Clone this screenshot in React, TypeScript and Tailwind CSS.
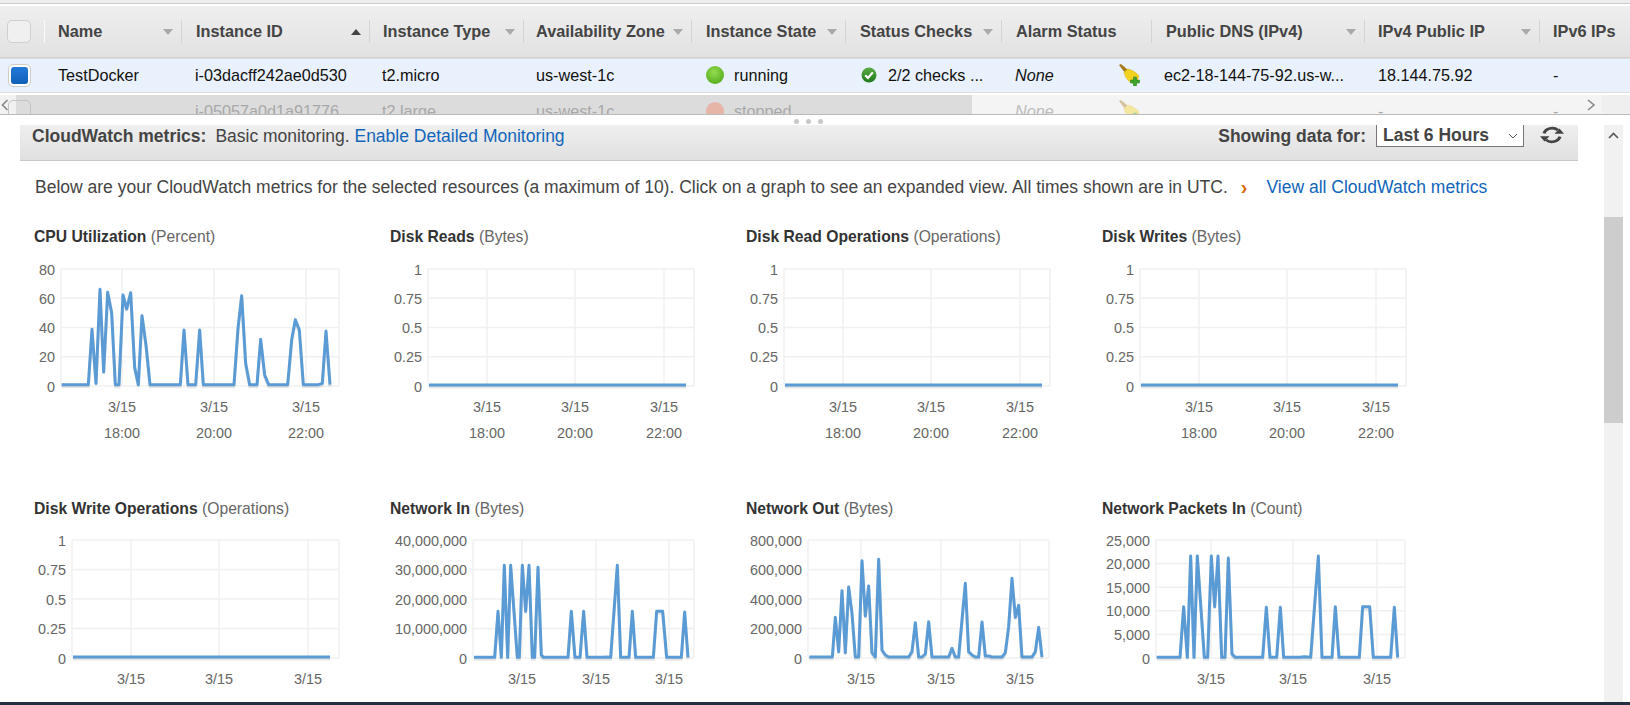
import React from 'react';

// turn a list of x,y pairs read off the screen into svg points
function trace(x0: number, y0: number, list: number[]) {
  const out: string[] = [];
  for (let i = 0; i < list.length; i += 2) {
    out.push(`${x0 + list[i] / 3},${y0 + list[i + 1] / 3}`);
  }
  return out.join(' ');
}

const cpu = trace(20, 250, [
  125, 404, 205, 404, 216, 238, 228, 400, 240, 118, 251, 366, 263, 127, 275, 188, 286, 404, 297, 404, 309, 135, 320,
  177, 332, 128, 344, 352, 355, 404, 366, 197, 378, 285, 390, 404, 481, 404, 492, 240, 504, 404, 527, 404, 539, 240,
  550, 404, 642, 404, 654, 235, 665, 137, 677, 340, 689, 404, 711, 404, 722, 268, 734, 375, 746, 404, 803, 404, 815,
  270, 826, 209, 838, 240, 850, 404, 895, 404, 907, 400, 918, 243, 930, 404,
]);
const netIn = trace(460, 530, [
  42, 382, 104, 382, 114, 244, 124, 382, 133, 106, 143, 382, 152, 106, 172, 382, 178, 382, 187, 106, 197, 244, 207,
  106, 217, 382, 224, 382, 234, 112, 244, 375, 250, 382, 324, 382, 334, 244, 345, 382, 360, 382, 371, 244, 381, 382,
  430, 382, 440, 381, 452, 382, 472, 106, 482, 382, 507, 382, 517, 244, 527, 382, 580, 382, 590, 244, 608, 244, 620,
  382, 664, 382, 674, 246, 684, 382,
]);
const netOut = trace(800, 530, [
  28, 381, 97, 381, 106, 262, 116, 365, 126, 182, 136, 368, 146, 171, 156, 250, 166, 381, 176, 381, 186, 92, 196, 258,
  206, 168, 216, 368, 226, 381, 236, 88, 246, 360, 256, 375, 266, 381, 326, 381, 336, 365, 346, 278, 356, 381, 366,
  381, 376, 372, 386, 275, 396, 381, 446, 381, 456, 355, 466, 381, 476, 381, 486, 270, 496, 160, 506, 365, 516, 375,
  526, 381, 536, 381, 546, 276, 556, 378, 566, 378, 576, 381, 606, 381, 616, 368, 626, 290, 636, 145, 646, 262, 656,
  226, 666, 381, 696, 381, 706, 365, 716, 292, 726, 381,
]);
const packetsIn = trace(1150, 530, [
  20, 382, 90, 382, 101, 230, 112, 382, 122, 78, 132, 382, 142, 78, 163, 382, 173, 382, 184, 78, 194, 230, 204, 78,
  215, 382, 225, 382, 235, 84, 246, 372, 256, 382, 338, 382, 349, 232, 360, 382, 380, 382, 391, 232, 401, 382, 450,
  382, 462, 380, 482, 382, 505, 78, 516, 382, 546, 382, 556, 230, 567, 382, 628, 382, 638, 230, 659, 230, 670, 382,
  722, 382, 733, 232, 743, 382,
]);

const zeroToOne = ['1', '0.75', '0.5', '0.25', '0'];

const row1 = { top: 269, bottom: 386, svgTop: 255 };
const row2 = { top: 540, bottom: 658, svgTop: 527 };

const charts = [
  { name: 'CPU Utilization', unit: 'Percent', labels: ['80', '60', '40', '20', '0'], col: 0, row: row1, left: 61, right: 339, ticks: [122, 214, 306], times: ['18:00', '20:00', '22:00'], series: cpu },
  { name: 'Disk Reads', unit: 'Bytes', labels: zeroToOne, col: 1, row: row1, left: 428, right: 694, ticks: [487, 575, 664], times: ['18:00', '20:00', '22:00'], series: '429,385 686,385' },
  { name: 'Disk Read Operations', unit: 'Operations', labels: zeroToOne, col: 2, row: row1, left: 784, right: 1050, ticks: [843, 931, 1020], times: ['18:00', '20:00', '22:00'], series: '785,385 1042,385' },
  { name: 'Disk Writes', unit: 'Bytes', labels: zeroToOne, col: 3, row: row1, left: 1140, right: 1406, ticks: [1199, 1287, 1376], times: ['18:00', '20:00', '22:00'], series: '1141,385 1398,385' },
  { name: 'Disk Write Operations', unit: 'Operations', labels: zeroToOne, col: 0, row: row2, left: 72, right: 339, ticks: [131, 219, 308], times: [], series: '73,657 330,657' },
  { name: 'Network In', unit: 'Bytes', labels: ['40,000,000', '30,000,000', '20,000,000', '10,000,000', '0'], col: 1, row: row2, left: 473, right: 694, ticks: [522, 596, 669], times: [], series: netIn },
  { name: 'Network Out', unit: 'Bytes', labels: ['800,000', '600,000', '400,000', '200,000', '0'], col: 2, row: row2, left: 808, right: 1049, ticks: [861, 941, 1020], times: [], series: netOut },
  { name: 'Network Packets In', unit: 'Count', labels: ['25,000', '20,000', '15,000', '10,000', '5,000', '0'], col: 3, row: row2, left: 1156, right: 1405, ticks: [1211, 1293, 1377], times: [], series: packetsIn },
];

type ChartProps = (typeof charts)[number];

function Chart({ name, unit, labels, col, row, left, right, ticks, times, series }: ChartProps) {
  const cellX = 34 + col * 356;
  const step = (row.bottom - row.top) / (labels.length - 1);
  return (
    <div className="h-[272px]">
      <div className="h-[20px] text-[15.7px] leading-[20px] whitespace-nowrap">
        <span className="font-bold text-[#333333]">{name}</span> <span className="text-[#666666]">({unit})</span>
      </div>
      <svg width="356" height="190" viewBox={`${cellX} ${row.svgTop} 356 190`} className="mt-[8px] block">
        {labels.map((label, i) => (
          <g key={label}>
            <line x1={left} x2={right} y1={row.top + i * step} y2={row.top + i * step} stroke="#f0f0f0" strokeWidth="1.5" />
            <text x={left - 6} y={row.top + i * step + 5.5} textAnchor="end" fontSize="14.4" fill="#666666">
              {label}
            </text>
          </g>
        ))}
        {[left, ...ticks, right].map((x) => (
          <line key={x} x1={x} x2={x} y1={row.top} y2={row.bottom} stroke="#f0f0f0" strokeWidth="1.5" />
        ))}
        {ticks.map((x, i) => (
          <g key={x} fontSize="14.4" fill="#666666" textAnchor="middle">
            <text x={x} y={row.bottom + 26}>3/15</text>
            {times[i] && <text x={x} y={row.bottom + 52}>{times[i]}</text>}
          </g>
        ))}
        <g className="blur-[0.4px]">
          <polyline points={series} fill="none" stroke="#000000" strokeOpacity="0.1" strokeWidth="3" transform="translate(0 2)" />
          <polyline points={series} fill="none" stroke="#5b9bd5" strokeWidth="3" strokeLinejoin="round" />
        </g>
      </svg>
    </div>
  );
}

const columns = [
  { label: 'Name', w: 'w-[137px]', pl: 'pl-[13px]', caret: 'down' },
  { label: 'Instance ID', w: 'w-[188px]', pl: 'pl-[14px]', caret: 'up' },
  { label: 'Instance Type', w: 'w-[154px]', pl: 'pl-[13px]', caret: 'down' },
  { label: 'Availability Zone', w: 'w-[168px]', pl: 'pl-[12px]', caret: 'down' },
  { label: 'Instance State', w: 'w-[154px]', pl: 'pl-[14px]', caret: 'down' },
  { label: 'Status Checks', w: 'w-[156px]', pl: 'pl-[14px]', caret: 'down' },
  { label: 'Alarm Status', w: 'w-[150px]', pl: 'pl-[14px]', caret: '' },
  { label: 'Public DNS (IPv4)', w: 'w-[213px]', pl: 'pl-[14px]', caret: 'down' },
  { label: 'IPv4 Public IP', w: 'w-[175px]', pl: 'pl-[13px]', caret: 'down' },
  { label: 'IPv6 IPs', w: 'w-[90px]', pl: 'pl-[13px]', caret: '' },
];

function HeaderCell({ label, w, pl, caret, last }: { label: string; w: string; pl: string; caret: string; last: boolean }) {
  return (
    <div className={`${w} ${pl} h-[23px] shrink-0 flex items-center justify-between pr-[8px] ${last ? '' : 'border-r border-[#d4d4d4]'}`}>
      <span className="font-bold text-[16.3px] text-[#444444] whitespace-nowrap">{label}</span>
      {caret === 'down' && <span className="w-0 h-0 border-x-[5px] border-x-transparent border-t-[6px] border-t-[#aaaaaa]" />}
      {caret === 'up' && <span className="w-0 h-0 border-x-[5px] border-x-transparent border-b-[6px] border-b-[#444444]" />}
    </div>
  );
}

function CheckIcon() {
  return (
    <svg width="16" height="16" viewBox="0 0 16 16" className="shrink-0">
      <defs>
        <linearGradient id="chk" x1="0" y1="0" x2="0" y2="1">
          <stop offset="0" stopColor="#5aad46" />
          <stop offset="1" stopColor="#1f7a1c" />
        </linearGradient>
      </defs>
      <circle cx="8" cy="8" r="7.5" fill="url(#chk)" />
      <path d="M4.2 8.2 L7 11 L11.8 5.4" fill="none" stroke="#ffffff" strokeWidth="2.2" />
    </svg>
  );
}

function BroomIcon() {
  return (
    <svg width="22" height="22" viewBox="0 0 22 22" className="shrink-0">
      <path d="M0 1 L2 0 L9 6 L6 9 Z" fill="#a6791f" />
      <path d="M5 8 L9 5 C13 6 18 9 20 12 L17 20 C12 20 6 15 5 8 Z" fill="#f2d21e" stroke="#d6ae12" strokeWidth="0.5" />
      <path d="M14.5 13 h3 v3 h3 v3 h-3 v3 h-3 v-3 h-3 v-3 h3 z" fill="#3fa52c" stroke="#1f7a1c" strokeWidth="0.5" />
    </svg>
  );
}

function RefreshIcon() {
  return (
    <svg width="26" height="18" viewBox="0 1 26 22" preserveAspectRatio="none" className="shrink-0 mt-[1px]">
      <path d="M5 10 A8.5 8.5 0 0 1 19 6" fill="none" stroke="#444444" strokeWidth="3.2" />
      <path d="M21 14 A8.5 8.5 0 0 1 7 18" fill="none" stroke="#444444" strokeWidth="3.2" />
      <path d="M15.5 10.5 L25 10.5 L20.5 4 Z" fill="#444444" />
      <path d="M1 13.5 L10.5 13.5 L5.5 20 Z" fill="#444444" />
    </svg>
  );
}

export default function App() {
  return (
    <div className="w-[1630px] h-[705px] overflow-hidden bg-white flex flex-col font-['Liberation_Sans',Arial,sans-serif] text-[#444444]">
      <div className="h-[4px] shrink-0 bg-[#eeeeee] border-b border-[#cccccc]" />
      <div className="h-[2px] shrink-0" />

      {/* instances table */}
      <div className="h-[52px] shrink-0 flex items-center bg-linear-to-b from-[#efefef] to-[#e2e2e2] border-b border-[#d0d0d0]">
        <div className="w-[45px] h-[23px] shrink-0 border-r border-[#fafafa] pl-[7px]">
          <div className="w-[24px] h-[23px] rounded-[5px] border border-[#cfcfcf] bg-[#f0f0f0]" />
        </div>
        {columns.map((c, i) => (
          <HeaderCell key={c.label} label={c.label} w={c.w} pl={c.pl} caret={c.caret} last={i === columns.length - 1} />
        ))}
      </div>
      <div className="h-[35px] shrink-0 flex items-center bg-[#e9f1fc] border-t border-b border-[#dddddd] text-[16.2px] text-[#111111] whitespace-nowrap">
        <div className="w-[45px] pl-[8px]">
          <div className="w-[23px] h-[23px] rounded-[5px] border border-[#cccccc] bg-white p-[2px]">
            <div className="w-full h-full rounded-[3px] bg-linear-to-b from-[#2379d8] to-[#1160b8]" />
          </div>
        </div>
        <div className="w-[137px] pl-[13px]">TestDocker</div>
        <div className="w-[188px] pl-[13px]">i-03dacff242ae0d530</div>
        <div className="w-[154px] pl-[12px]">t2.micro</div>
        <div className="w-[168px] pl-[12px]">us-west-1c</div>
        <div className="w-[154px] pl-[14px] flex items-center">
          <span className="w-[18px] h-[18px] rounded-full bg-[radial-gradient(circle_at_45%_35%,#93dd4f,#45a011)]" />
          <span className="ml-[10px]">running</span>
        </div>
        <div className="w-[156px] pl-[15px] flex items-center">
          <CheckIcon />
          <span className="ml-[11px]">2/2 checks ...</span>
        </div>
        <div className="w-[150px] pl-[13px] flex items-center">
          <span className="italic w-[104px]">None</span>
          <BroomIcon />
        </div>
        <div className="w-[213px] pl-[12px]">ec2-18-144-75-92.us-w...</div>
        <div className="w-[175px] pl-[13px]">18.144.75.92</div>
        <div className="w-[90px] pl-[13px]">-</div>
      </div>

      <div className="relative h-[22px] shrink-0 overflow-hidden border-b border-[#bbbbbb]">
        {/* horizontal scrollbar lies over the second row */}
        <div className="absolute inset-x-0 top-[2px] bottom-0 flex bg-[#f4f4f4]">
          <div className="w-[16px] flex items-center pl-[1px] bg-[#f1f1f1]">
            <svg width="8" height="12" viewBox="0 0 8 12">
              <path d="M6.5 1 L1.5 6 L6.5 11" fill="none" stroke="#888888" strokeWidth="1.6" />
            </svg>
          </div>
          <div className="w-[956px] bg-[#dcdcdc]" />
          <div className="flex-1 flex items-center justify-end pr-[6px]">
            <svg width="10" height="14" viewBox="0 0 10 14">
              <path d="M2 2 L8 7 L2 12" fill="none" stroke="#888888" strokeWidth="1.6" />
            </svg>
          </div>
          <div className="w-[28px] bg-[#efefef]" />
        </div>
        <div className="relative h-[36px] flex items-center text-[16.2px] text-[#a8a8a8] whitespace-nowrap">
          <div className="w-[45px] pl-[8px]">
            <div className="w-[23px] h-[23px] rounded-[5px] border border-[#c4c4c4] bg-transparent" />
          </div>
          <div className="w-[137px]" />
          <div className="w-[188px] pl-[13px]">i-05057a0d1a91776</div>
          <div className="w-[154px] pl-[12px]">t2.large</div>
          <div className="w-[168px] pl-[12px]">us-west-1c</div>
          <div className="w-[154px] pl-[14px] flex items-center">
            <span className="w-[18px] h-[18px] rounded-full bg-[#e6b5a8]" />
            <span className="ml-[10px]">stopped</span>
          </div>
          <div className="w-[156px]" />
          <div className="w-[150px] pl-[13px] flex items-center">
            <span className="italic w-[104px] text-[#bbbbbb]">None</span>
            <span className="opacity-40">
              <BroomIcon />
            </span>
          </div>
          <div className="w-[213px]" />
          <div className="w-[175px] pl-[13px]">-</div>
          <div className="w-[90px] pl-[13px]">-</div>
        </div>
      </div>

      {/* sash between the table and the details pane */}
      <div className="h-[10px] shrink-0 flex items-end justify-center gap-[7px] pr-[14px] pb-[1px]">
        <span className="w-[5px] h-[5px] rounded-full bg-[#c8c8c8]" />
        <span className="w-[5px] h-[5px] rounded-full bg-[#c8c8c8]" />
        <span className="w-[5px] h-[5px] rounded-full bg-[#c8c8c8]" />
      </div>

      <div className="flex-1 min-h-0 flex">
        <div className="w-[1584px] ml-[20px] overflow-hidden">
          <div className="h-[36px] mr-[26px] flex items-start justify-between bg-linear-to-b from-[#efefef] to-[#e0e0e0] border-b border-[#c8c8c8] pl-[12px] pr-[13px] text-[17.5px]">
            <div className="h-[22px] leading-[22px] whitespace-nowrap">
              <span className="font-bold">CloudWatch metrics:</span>
              <span className="ml-[9px]">Basic monitoring. </span>
              <span className="text-[#1166bb]">Enable Detailed Monitoring</span>
            </div>
            <div className="flex items-start">
              <span className="font-bold leading-[22px] mr-[10px]">Showing data for:</span>
              <div className="w-[148px] h-[22px] bg-white border-x border-b border-[#767676] pl-[6px] pr-[5px] flex items-center justify-between">
                <span className="font-bold">Last 6 Hours</span>
                <svg width="10" height="6" viewBox="0 0 10 6">
                  <path d="M1 1 L5 5 L9 1" fill="none" stroke="#555555" strokeWidth="1" />
                </svg>
              </div>
              <span className="ml-[15px]">
                <RefreshIcon />
              </span>
            </div>
          </div>

          <div className="mt-[14px] h-[24px] pl-[15px] flex items-center text-[17.5px] whitespace-nowrap">
            <span>
              Below are your CloudWatch metrics for the selected resources (a maximum of 10). Click on a graph to see an
              expanded view. All times shown are in UTC.
            </span>
            <span className="ml-[13px] text-[20px] font-bold text-[#dd6b10]">›</span>
            <span className="ml-[19px] text-[#1166bb]">View all CloudWatch metrics</span>
          </div>

          <div className="mt-[28px] pl-[14px] grid grid-cols-[repeat(4,356px)]">
            {charts.map((c) => (
              <Chart key={c.name} {...c} />
            ))}
          </div>
        </div>

        {/* vertical scrollbar */}
        <div className="w-[19px] shrink-0 bg-[#f1f1f1] flex flex-col">
          <div className="h-[20px] flex items-center justify-center">
            <svg width="11" height="7" viewBox="0 0 11 7">
              <path d="M1 6 L5.5 1.5 L10 6" fill="none" stroke="#555555" strokeWidth="1.6" />
            </svg>
          </div>
          <div className="h-[72px]" />
          <div className="h-[206px] bg-[#cdcdcd]" />
        </div>
      </div>

      <div className="h-[3px] shrink-0 bg-[#232f3e]" />
    </div>
  );
}
